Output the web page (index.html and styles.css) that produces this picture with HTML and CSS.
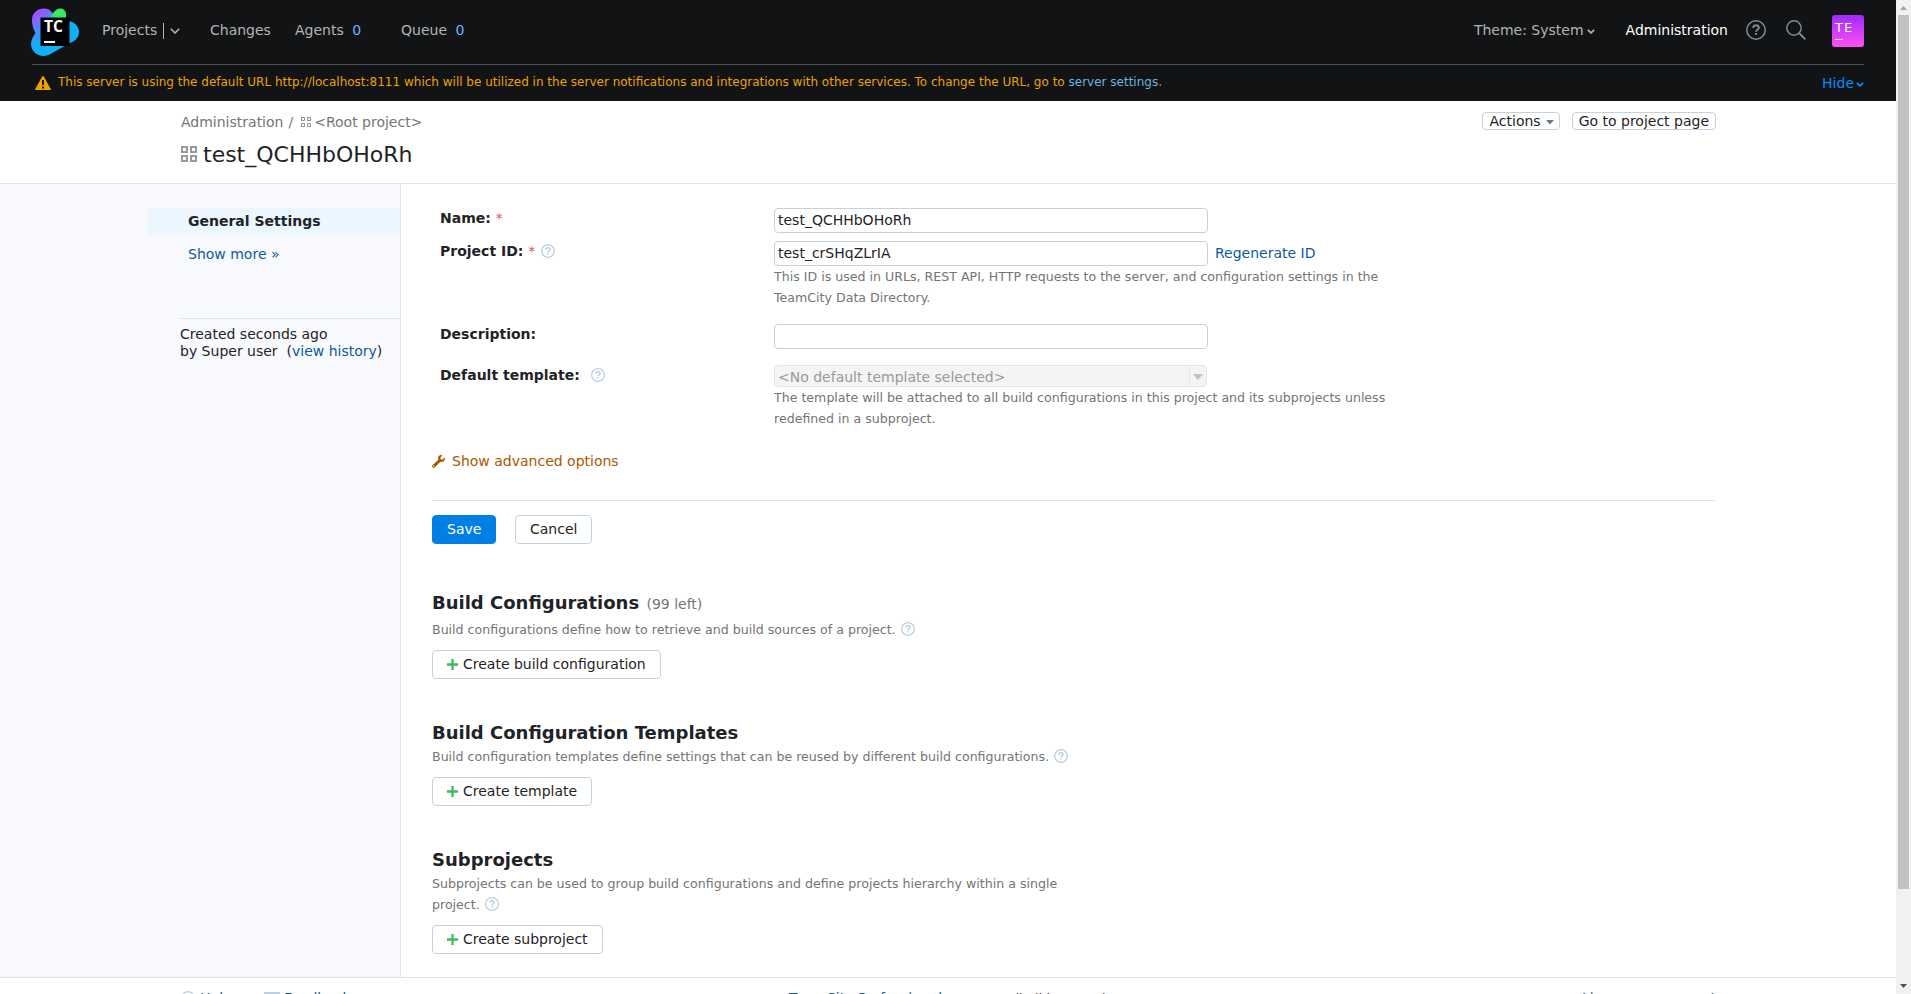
FILE: index.html
```html
<!DOCTYPE html>
<html lang="en">
<head>
<meta charset="utf-8">
<title>test_QCHHbOHoRh — TeamCity</title>
<link rel="stylesheet" href="styles.css">
</head>
<body>
<svg class="defs" width="0" height="0">
  <symbol id="help" viewBox="0 0 14 14"><circle cx="7" cy="7" r="6.35" fill="none" stroke="currentColor" stroke-width="1.3"/><path d="M5 5.7c0-1.200.8-1.900 2-1.900s2 .7 2 1.700c0 1.300-1.900 1.400-1.900 2.800" fill="none" stroke="currentColor" stroke-width="1.500"/><path d="M6.300 9.100h1.500v1.500H6.300z" fill="currentColor"/></symbol>
  <symbol id="plus" viewBox="0 0 11 11"><path d="M5.500 0v11M0 5.500h11" stroke="#3dbb5f" stroke-width="2.300" fill="none"/></symbol>
  <symbol id="chevron" viewBox="0 0 10 6"><path d="M.8.8 5 5 9.200.8" stroke="currentColor" stroke-width="1.600" fill="none"/></symbol>
  <symbol id="chevron-small" viewBox="0 0 8 5"><path d="M.8.8 4 3.900 7.200.8" stroke="currentColor" stroke-width="1.700" fill="none"/></symbol>
</svg>
<div class="window">
  <div class="page">
    <header class="header">
      <nav class="topbar">
        <svg class="logo" width="48" height="48" viewBox="0 0 48 48">
          <defs>
            <linearGradient id="lg1" x1="2" y1="9" x2="17" y2="28" gradientUnits="userSpaceOnUse"><stop offset="0" stop-color="#a052ff"/><stop offset=".5" stop-color="#4f87fb"/><stop offset="1" stop-color="#0fb0f5"/></linearGradient>
            <linearGradient id="lg2" x1="18" y1="12" x2="30" y2="4" gradientUnits="userSpaceOnUse"><stop offset="0" stop-color="#21b5ac"/><stop offset=".6" stop-color="#3bea62"/></linearGradient>
          </defs>
          <path d="M38 13c6 1.500 10 5.500 10 11 0 6-4 9-9 11L19 46.300C10 51 0 45 0 36c0-4 2-7 4.500-11C2 21 1 16 1 12 1 3 10-2 18 1.500L27 10v6z" fill="url(#lg1)"/>
          <path d="M17 11 24 3c3-4.500 11-3 11 3v5z" fill="url(#lg2)"/>
          <path d="M9.500 9.500h29v28.500h-29z" fill="#000"/>
          <text x="13" y="23.800" class="logo-text">TC</text>
          <path d="M13 33h11v2H13z" fill="#fff"/>
        </svg>
        <a class="nav-projects">Projects</a><i class="nav-divider"></i>
        <svg class="nav-chevron" width="10" height="6"><use href="#chevron"/></svg>
        <a class="nav-changes">Changes</a>
        <a class="nav-agents">Agents <b class="count">0</b></a>
        <a class="nav-queue">Queue <b class="count">0</b></a>
        <div class="nav-right">
          <a>Theme: System</a><svg class="theme-chevron" width="8" height="5"><use href="#chevron-small"/></svg>
          <a class="nav-admin">Administration</a>
          <svg class="nav-help" width="20" height="20" viewBox="0 0 20 20"><circle cx="10" cy="10" r="9.200" fill="none" stroke="#7b8d9b" stroke-width="1.500"/><path d="M7.200 8c0-1.700 1.100-2.700 2.800-2.700s2.800 1 2.800 2.500c0 1.900-2.700 2-2.700 4" fill="none" stroke="#7b8d9b" stroke-width="1.900"/><path d="M9.100 13h1.900v2H9.100z" fill="#7b8d9b"/></svg>
          <svg class="nav-search" width="20" height="20" viewBox="0 0 20 20"><circle cx="8" cy="8" r="7.200" fill="none" stroke="#7b8d9b" stroke-width="1.500"/><path d="m13 13 6.300 6.300" stroke="#7b8d9b" stroke-width="1.800"/></svg>
          <div class="avatar"><span>TE</span><i></i></div>
        </div>
      </nav>
      <div class="notice">
        <svg width="16" height="14" viewBox="0 0 16 14"><path d="M7.200.6c.4-.7 1.200-.7 1.600 0L16 13.500c0 .4-.2.500-.5.500H.5c-.3 0-.5-.1-.5-.5z" fill="#eda200"/><path d="M7 4h2v5H7zM7 10.500h2v2H7z" fill="#121314"/></svg>
        <p>This server is using the default URL http://localhost:8111 which will be utilized in the server notifications and integrations with other services. To change the URL, go to <a>server settings</a>.</p>
        <a class="hide">Hide<svg width="8" height="5"><use href="#chevron-small"/></svg></a>
      </div>
    </header>

    <section class="title-area">
      <div class="titles">
        <div class="crumbs">Administration<span class="slash">/</span><svg width="10" height="10" viewBox="0 0 10 10"><path d="M.5.5h3v3h-3zM6.500.5h3v3h-3zM.5 6.500h3v3h-3zM6.500 6.500h3v3h-3z" fill="none" stroke="#8f8f8f"/></svg>&lt;Root project&gt;</div>
        <h1><svg width="16" height="16" viewBox="0 0 16 16"><path d="M1 1h5v5H1zM10 1h5v5h-5zM1 10h5v5H1zM10 10h5v5h-5z" fill="none" stroke="#999" stroke-width="2"/></svg>test_QCHHbOHoRh</h1>
      </div>
      <div class="title-actions">
        <button class="mini">Actions<svg width="8" height="5"><path d="M0 0h8L4 4.500z" fill="#737577"/></svg></button>
        <button class="mini">Go to project page</button>
      </div>
    </section>

    <div class="body">
      <aside class="sidebar">
        <a class="tab active">General Settings</a>
        <a class="tab link">Show more »</a>
        <div class="created">Created seconds ago<br>by Super user&nbsp; (<a class="link">view history</a>)</div>
      </aside>
      <main class="content">
        <form class="form">
          <div class="row row-name"><label>Name: <em>*</em></label><div class="field"><input type="text" value="test_QCHHbOHoRh"></div></div>
          <div class="row row-id"><label>Project ID: <em>*</em><svg class="help help-id" width="14" height="14"><use href="#help"/></svg></label>
            <div class="field"><div class="with-link"><input type="text" value="test_crSHqZLrIA"><a class="link">Regenerate ID</a></div>
            <p class="hint">This ID is used in URLs, REST API, HTTP requests to the server, and configuration settings in the<br>TeamCity Data Directory.</p></div></div>
          <div class="row row-desc"><label>Description:</label><div class="field"><input type="text"></div></div>
          <div class="row row-template"><label>Default template:<svg class="help help-template" width="14" height="14"><use href="#help"/></svg></label>
            <div class="field"><div class="select"><span>&lt;No default template selected&gt;</span><i><svg width="10" height="6"><path d="M0 0h10L5 6z" fill="#c3c3c3"/></svg></i></div>
            <p class="hint">The template will be attached to all build configurations in this project and its subprojects unless<br>redefined in a subproject.</p></div></div>
        </form>
        <a class="advanced"><svg width="13" height="13" viewBox="0 0 13 13"><path d="M12.700 2.600 10.600 4.600 8.700 4.200 8.400 2.400 10.400.3C8.700-.3 6.900.4 6.300 2c-.4 1-.3 1.900 0 2.700L.5 10.200c-1.400 1.500.7 3.700 2.200 2.300L8.300 6.700c1 .4 2.300.3 3.300-.5 1.200-.9 1.600-2.300 1.100-3.600zM1.600 11.800a.6.6 0 1 1 .01 0z" fill="#ad5700" fill-rule="evenodd"/></svg>Show advanced options</a>
        <div class="submit"><button class="btn primary">Save</button><button class="btn cancel">Cancel</button></div>

        <section class="block configs">
          <h2>Build Configurations <small>(99 left)</small></h2>
          <p class="hint">Build configurations define how to retrieve and build sources of a project.<svg class="help" width="14" height="14"><use href="#help"/></svg></p>
          <button class="btn create"><svg width="11" height="11"><use href="#plus"/></svg>Create build configuration</button>
        </section>
        <section class="block">
          <h2>Build Configuration Templates</h2>
          <p class="hint">Build configuration templates define settings that can be reused by different build configurations.<svg class="help" width="14" height="14"><use href="#help"/></svg></p>
          <button class="btn create"><svg width="11" height="11"><use href="#plus"/></svg>Create template</button>
        </section>
        <section class="block">
          <h2>Subprojects</h2>
          <p class="hint">Subprojects can be used to group build configurations and define projects hierarchy within a single<br>project.<svg class="help" width="14" height="14"><use href="#help"/></svg></p>
          <button class="btn create"><svg width="11" height="11"><use href="#plus"/></svg>Create subproject</button>
        </section>
      </main>
    </div>

    <footer class="footer">
      <div class="foot-left"><svg class="help" width="14" height="14"><use href="#help"/></svg><a class="link">Help</a>
        <svg class="mail" width="16" height="12" viewBox="0 0 16 12"><path d="M1 1h14v10H1zM1 1l7 6 7-6" fill="none" stroke="#b8d1e5" stroke-width="2"/></svg><a class="link">Feedback</a></div>
      <div class="foot-mid"><a class="link">TeamCity Professional</a><span class="build"> 2023.11.4 (build 147586)</span></div>
      <a class="link">License agreement</a>
    </footer>
  </div>
  <div class="scrollbar">
    <svg width="15" height="15"><path d="M4 10h7L7.500 6z" fill="#a3a3a3"/></svg>
    <i class="thumb"></i>
    <svg width="15" height="15"><path d="M4 5h7L7.500 9z" fill="#505050"/></svg>
  </div>
</div>
</body>
</html>
```

FILE: styles.css
```css
* { box-sizing: border-box; }
body { margin: 0; font: 14px/20px "DejaVu Sans", sans-serif; color: #1f2326; background: #fff; overflow: hidden; }
svg { display: block; flex: none; }
p, h1, h2 { margin: 0; }
button, input { font: inherit; color: inherit; }
i { font-style: normal; }
.defs { position: absolute; }
.link { color: #0f5b99; }
.window { display: flex; width: 1911px; height: 994px; overflow: hidden; }
.page { width: 1896px; height: 994px; display: flex; flex-direction: column; overflow: hidden; }

.header { flex: none; height: 101px; padding: 0 32px; background: #121314; }
.topbar { display: flex; align-items: flex-start; height: 65px; padding-top: 20px; border-bottom: 1px solid #474f57; color: #b3b3b4; white-space: nowrap; }
.logo { margin: -12px 0 0 -1px; }
.logo-text { font: bold 15.5px "Open Sans", sans-serif; fill: #fff; }
.nav-projects { margin-left: 23px; width: 61px; }
.nav-divider { width: 1px; height: 16px; margin-top: 3px; background: #b3b3b4; }
.nav-chevron { margin: 8px 30px 0 6px; }
.nav-changes { width: 85px; }
.nav-agents { width: 106px; }
.count { font-weight: 400; color: #6bb3ff; margin-left: 4px; }
.nav-right { margin-left: auto; display: flex; align-items: flex-start; }
.theme-chevron { margin: 9px 31px 0 3px; }
.nav-admin { color: #fff; }
.nav-help { margin-left: 18px; }
.nav-search { margin-left: 20px; }
.avatar { width: 32px; height: 32px; margin: -5px 0 0 26px; padding: 4px 3px; border-radius: 3px; background: linear-gradient(#9f2bff, #ff4fef); color: #fff; font-size: 13px; line-height: 18px; letter-spacing: 1px; }
.avatar span { display: block; height: 20px; }
.avatar i { display: block; width: 8px; height: 1px; background: #fff; }
.notice { display: flex; padding: 7px 0 0 3px; font-size: 12px; color: #eda200; }
.notice svg { margin-top: 4px; }
.notice p { margin-left: 7px; }
.notice p a { color: #6bb3e0; }
.hide { display: flex; align-items: center; gap: 2px; margin: 1px 0 0 auto; font-size: 14px; color: #008eff; }
.hide svg { margin-top: 3px; }

.title-area { flex: none; height: 83px; display: flex; justify-content: space-between; padding: 11px 180px 0 181px; border-bottom: 1px solid #dfe2e6; }
.crumbs { display: flex; height: 20px; color: #737577; }
.crumbs svg { margin: 5px 3px 0 0; }
.slash { margin: 0 8px 0 5px; }
h1 { display: flex; gap: 6px; margin-top: 9px; font-size: 22px; line-height: 28px; font-weight: 400; }
h1 svg { margin-top: 5px; }
.title-actions { display: flex; gap: 12px; }
.mini { display: flex; align-items: center; gap: 5px; height: 18px; padding: 0 6px; border: 1px solid #c3d1e0; border-radius: 4px; background: #fff; white-space: nowrap; }
.mini svg { margin: 2px -1px 0 0; }

.body { flex: none; display: flex; height: 793px; }
.sidebar { width: 401px; padding: 24px 0 0 148px; background: #f7f9fc; border-right: 1px solid #dfe5eb; }
.tab { display: block; height: 27px; padding: 3px 0 0 40px; margin-bottom: 6px; }
.active { background: #ebf6ff; font-weight: 700; }
.created { margin: 50px 0 0 32px; padding-top: 7px; border-top: 1px solid #dfe5eb; line-height: 17px; white-space: nowrap; }

.content { width: 1315px; padding-left: 31px; }
.form { padding: 24px 0 0 8px; height: 269px; }
.row { display: flex; }
.row label { width: 334px; display: flex; font-weight: 700; white-space: pre; }
.row em { font-style: normal; font-weight: 400; color: #db5860; }
.row-name { height: 33px; }
.row-id { height: 83px; }
.row-desc { height: 41px; }
.help { color: #b8d1e5; }
.help-id { margin: 3px 0 0 6px; }
.help-template { margin: 3px 0 0 11px; }
.field input { display: block; width: 434px; height: 25px; padding: 0 3px 1px; border: 1px solid #c3d1e0; border-radius: 4px; background: #fff; outline: 0; }
.with-link { display: flex; gap: 7px; }
.with-link a { padding-top: 2px; }
.hint { font-size: 12.6px; line-height: 21px; color: #737577; white-space: nowrap; }
.select { display: flex; width: 433px; height: 22px; border: 1px solid #e5e5e5; border-radius: 4px; background: #f4f4f4; color: #999; }
.select span { flex: 1; padding: 1px 0 0 3px; }
.select i { width: 17px; border-left: 1px solid #e5e5e5; padding: 8px 0 0 3px; }
.advanced { display: flex; gap: 7px; height: 49px; color: #ad5700; margin-top: -2px; }
.advanced svg { margin-top: 4px; }
.submit { display: flex; gap: 19px; width: 1284px; padding-top: 14px; border-top: 1px solid #dfe5eb; }
.btn { display: block; height: 29px; padding: 0 14px; border: 1px solid #c3d1e0; border-radius: 4px; background: #fff; line-height: 25px; white-space: nowrap; }
.primary { width: 64px; background: #0080e5; border-color: #0080e5; color: #fff; }
.cancel { width: 77px; }
.create { display: flex; align-items: center; gap: 5px; }
.block { padding-top: 42px; }
.configs { padding-top: 47px; }
h2 { font-size: 18px; line-height: 24px; }
h2 small { font-size: 14px; font-weight: 400; color: #737577; margin-left: 1px; }
.block .hint { margin: 1px 0 10px; }
.configs .hint { margin-top: 3px; }
.block .hint .help { display: inline-block; vertical-align: -2px; margin-left: 5px; }

.footer { height: 17px; flex: none; display: flex; justify-content: space-between; padding: 10px 180px 0 181px; border-top: 1px solid #dfe2e6; white-space: nowrap; }
.foot-left { display: flex; width: 608px; }
.foot-left .help { margin: 3px 5px 0 0; }
.mail { margin: 4px 4px 0 32px; }
.foot-mid { flex: 1; }
.build { font-size: 12.6px; white-space: pre; }

.scrollbar { width: 15px; height: 994px; display: flex; flex-direction: column; background: #f1f1f1; }
.thumb { width: 11px; height: 874px; margin: 0 2px 90px; background: #c1c1c1; }
```
